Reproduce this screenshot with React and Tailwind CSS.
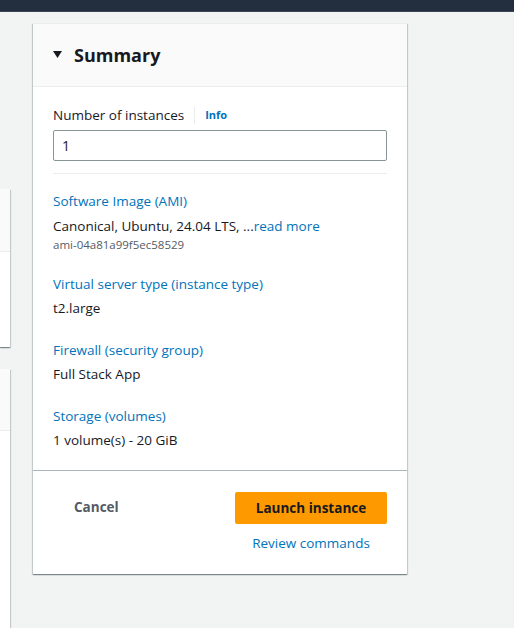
export default function App() {
  const font = { fontFamily: '"Open Sans", "Liberation Sans", Arial, sans-serif' };
  const shadow =
    "shadow-[0_1px_1px_0_rgba(0,28,36,0.3),1px_1px_1px_0_rgba(0,28,36,0.15),-1px_1px_1px_0_rgba(0,28,36,0.15)]";
  return (
    <div className="h-[628px] w-[514px] overflow-hidden bg-[#f2f3f3] text-[#16191f]" style={font}>
      <div className="h-[12px] bg-[#232f3e] border-b border-[#3b4754]" />
      <div className="flex pt-[11px]">
        <div className="w-[10px] shrink-0 flex flex-col">
          <div className={`mt-[166px] h-[158px] bg-white ${shadow} flex flex-col`}>
            <div className="h-[63px] bg-[#fafafa] border-b border-[#eaeded]" />
          </div>
          <div className={`mt-[22px] h-[600px] bg-white ${shadow} flex flex-col`}>
            <div className="h-[62px] bg-[#fafafa] border-b border-[#eaeded]" />
          </div>
        </div>
        <div className={`ml-[23px] w-[374px] h-[551px] bg-white ${shadow} border-t border-[#eaeded] flex flex-col`}>
          <div className="h-[63px] bg-[#fafafa] border-b border-[#eaeded] flex items-center pl-[20px]">
            <svg width="9" height="8" viewBox="0 0 9 8" className="mr-[12px]">
              <polygon points="0,0 9,0 4.5,7" fill="#16191f" />
            </svg>
            <span className="text-[18px] font-bold leading-none">Summary</span>
          </div>
          <div className="px-[20px] pt-[17px] flex flex-col flex-1">
            <div className="flex items-center h-[22px]">
              <span className="text-[13.5px] leading-[22px]">Number of instances</span>
              <span className="mx-[10px] h-[17px] w-px bg-[#eaeded]" />
              <span className="text-[11px] font-bold text-[#0073bb]">Info</span>
            </div>
            <div className="mt-[4px] h-[31px] border border-[#879596] rounded-[2px] flex items-center px-[8px] text-[14px]">
              1
            </div>
            <div className="mt-[12px] border-t border-[#eaeded]" />
            <div className="mt-[16px] text-[13.5px] leading-[22px] text-[#0073bb]">Software Image (AMI)</div>
            <div className="mt-[3px] text-[13.5px] leading-[22px]">
              Canonical, Ubuntu, 24.04 LTS, ...<span className="text-[#0073bb]">read more</span>
            </div>
            <div className="text-[11.5px] leading-[15px] text-[#545b64]">ami-04a81a99f5ec58529</div>
            <div className="mt-[21px] text-[13.5px] leading-[22px] text-[#0073bb]">Virtual server type (instance type)</div>
            <div className="mt-[2px] text-[13.5px] leading-[22px]">t2.large</div>
            <div className="mt-[20px] text-[13.5px] leading-[22px] text-[#0073bb]">Firewall (security group)</div>
            <div className="mt-[2px] text-[13.5px] leading-[22px]">Full Stack App</div>
            <div className="mt-[20px] text-[13.5px] leading-[22px] text-[#0073bb]">Storage (volumes)</div>
            <div className="mt-[2px] text-[13.5px] leading-[22px]">1 volume(s) - 20 GiB</div>
          </div>
          <div className="border-t border-[#aab7b8] h-[104px] flex px-[20px] pt-[21px]">
            <div className="flex-1 flex items-start">
              <span className="mt-[5px] ml-[21px] text-[13.5px] font-bold text-[#545b64]">Cancel</span>
            </div>
            <div className="flex flex-col items-center w-[152px]">
              <div className="h-[32px] w-[152px] rounded-[2px] bg-[#ff9900] flex items-center justify-center text-[13.5px] font-bold text-[#16191f]">
                Launch instance
              </div>
              <div className="mt-[9px] text-[13.5px] text-[#0073bb]">Review commands</div>
            </div>
          </div>
        </div>
      </div>
    </div>
  );
}
